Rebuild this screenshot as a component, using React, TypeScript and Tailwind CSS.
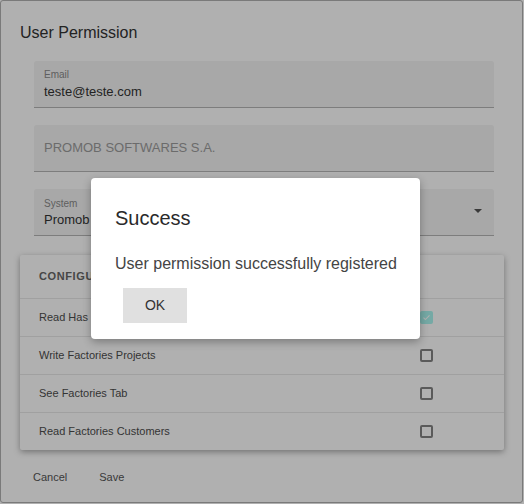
import React from "react";

const rows = [
  { label: "Read Has Factories", checked: true },
  { label: "Write Factories Projects", checked: false },
  { label: "See Factories Tab", checked: false },
  { label: "Read Factories Customers", checked: false },
];

function Checkbox({ checked }: { checked: boolean }) {
  if (checked) {
    return (
      <div className="w-[13px] h-[13px] rounded-[2px] bg-[#aaf5ef] flex items-center justify-center">
        <svg width="9" height="9" viewBox="0 0 24 24" fill="none">
          <path d="M4 12.5l5 5L20 6.5" stroke="#ffffff" strokeWidth="3" />
        </svg>
      </div>
    );
  }
  return <div className="w-[13px] h-[13px] rounded-[2px] border-2 border-[#838383]" />;
}

export default function App() {
  return (
    <div
      className="relative w-[524px] h-[504px] overflow-hidden bg-white"
      style={{ fontFamily: '"Liberation Sans", Arial, sans-serif' }}
    >
      <div className="w-[523px] h-[503px] border border-[#b1b1b1] rounded-[3px] bg-white pl-[19px] pt-[22px] flex flex-col">
        <div className="text-[16px] leading-[20px] text-[#333]">User Permission</div>

        <div className="mt-[18px] ml-[14px] w-[460px] h-[47px] bg-[#f3f3f3] border-b border-[#b5b5b5] rounded-t-[3px] px-[10px] pt-[8px] flex flex-col">
          <div className="text-[10px] leading-[12px] text-[#8a8a8a]">Email</div>
          <div className="mt-[3px] text-[13px] leading-[16px] text-[#333]">teste@teste.com</div>
        </div>

        <div className="mt-[17px] ml-[14px] w-[460px] h-[47px] bg-[#f3f3f3] border-b border-[#b5b5b5] rounded-t-[3px] px-[10px] flex items-center">
          <div className="text-[13px] leading-[16px] text-[#9c9c9c]">PROMOB SOFTWARES S.A.</div>
        </div>

        <div className="mt-[17px] ml-[14px] w-[460px] h-[47px] bg-[#f3f3f3] border-b border-[#b5b5b5] rounded-t-[3px] pl-[10px] pr-[12px] flex items-center justify-between">
          <div className="flex flex-col pt-[2px]">
            <div className="flex items-center text-[10px] leading-[12px] text-[#8a8a8a]">
              System
              <span className="ml-[14px] inline-block w-[6px] h-[6px] rounded-full bg-[#2196f3]" />
            </div>
            <div className="mt-[2px] text-[13px] leading-[16px] text-[#333]">Promob</div>
          </div>
          <svg width="8" height="4" viewBox="0 0 8 4" className="mt-[-2px]">
            <path d="M0 0h8L4 4z" fill="#555" />
          </svg>
        </div>

        <div className="mt-[19px] w-[484px] bg-white rounded-[2px] shadow-[0_2px_6px_rgba(0,0,0,0.35)] flex flex-col">
          <div className="h-[43px] flex items-center pl-[19px] text-[11px] font-bold tracking-[0.6px] text-[#666]">
            CONFIGURATIONS
          </div>
          {rows.map((r) => (
            <div key={r.label} className="h-[38px] border-t border-[#e8e8e8] flex items-center">
              <div className="w-[400px] pl-[19px] text-[11px] text-[#4d4d4d]">{r.label}</div>
              <Checkbox checked={r.checked} />
            </div>
          ))}
        </div>

        <div className="mt-[20px] ml-[13px] flex gap-[32px] text-[11px] leading-[14px] text-[#555]">
          <span>Cancel</span>
          <span>Save</span>
        </div>
      </div>

      <div className="absolute inset-0 bg-black/[0.31]" />

      <div className="absolute left-[91px] top-[178px] w-[329px] h-[161px] bg-white rounded-[4px] shadow-[0_3px_8px_rgba(0,0,0,0.3)] pl-[24px] pt-[28px] flex flex-col">
        <div className="text-[20px] leading-[24px] text-[#2a2a2a]">Success</div>
        <div className="mt-[25px] text-[16px] leading-[18px] text-[#444]">User permission successfully registered</div>
        <div className="mt-[15px] ml-[8px] w-[64px] h-[35px] bg-[#e0e0e0] flex items-center justify-center text-[14px] text-[#333]">
          OK
        </div>
      </div>
    </div>
  );
}
